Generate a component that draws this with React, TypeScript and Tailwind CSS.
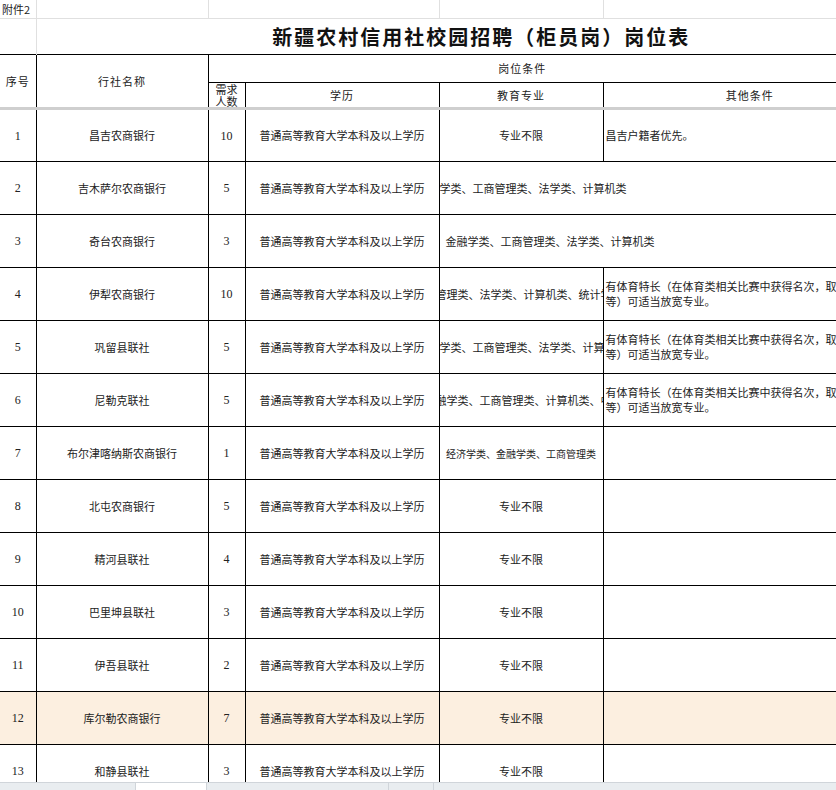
const rows = [
  { n: "1", name: "昌吉农商银行", c: "10", major: "专业不限", other: "昌吉户籍者优先。" },
  { n: "2", name: "吉木萨尔农商银行", c: "5", span: "学类、工商管理类、法学类、计算机类", off: 0 },
  { n: "3", name: "奇台农商银行", c: "3", span: "金融学类、工商管理类、法学类、计算机类", off: 6 },
  { n: "4", name: "伊犁农商银行", c: "10", clip: "管理类、法学类、计算机类、统计学类", sport: true, off: -4 },
  { n: "5", name: "巩留县联社", c: "5", clip: "学类、工商管理类、法学类、计算机类", sport: true, off: 0 },
  { n: "6", name: "尼勒克联社", c: "5", clip: "融学类、工商管理类、计算机类、中", sport: true, off: -4 },
  { n: "7", name: "布尔津喀纳斯农商银行", c: "1", major: "经济学类、金融学类、工商管理类", other: "", sm: true },
  { n: "8", name: "北屯农商银行", c: "5", major: "专业不限", other: "" },
  { n: "9", name: "精河县联社", c: "4", major: "专业不限", other: "" },
  { n: "10", name: "巴里坤县联社", c: "3", major: "专业不限", other: "" },
  { n: "11", name: "伊吾县联社", c: "2", major: "专业不限", other: "" },
  { n: "12", name: "库尔勒农商银行", c: "7", major: "专业不限", other: "", hl: true },
  { n: "13", name: "和静县联社", c: "3", major: "专业不限", other: "" },
];

const serif = { fontFamily: '"Liberation Serif", serif' };
const cell = "border border-black text-center align-middle p-0";

export default function App() {
  return (
    <div
      className="w-[836px] h-[790px] overflow-hidden bg-white text-[11px] text-[#222] relative"
      style={{ fontFamily: '"Noto Sans CJK SC", "Noto Sans", sans-serif' }}
    >
      <table className="table-fixed border-collapse w-[836px]">
        <colgroup>
          <col className="w-[36px]" />
          <col className="w-[172px]" />
          <col className="w-[37px]" />
          <col className="w-[194px]" />
          <col className="w-[164px]" />
          <col className="w-[233px]" />
        </colgroup>
        <tbody>
          <tr className="h-[18px]">
            <td colSpan={2} className="border-r border-b border-[#e0e0e0] text-left text-[11px] leading-none">
              <div className="flex items-center h-[18px]">
                <span className="w-[36px] pl-[2px] whitespace-nowrap">附件2</span>
                <span className="flex-1 border-l border-[#e0e0e0] h-[18px]" />
              </div>
            </td>
            <td colSpan={2} className="border-r border-b border-[#e0e0e0]" />
            <td className="border-r border-b border-[#e0e0e0]" />
            <td className="border-b border-[#e0e0e0]" />
          </tr>
          <tr className="h-[36px]">
            <td className="border-r border-[#e0e0e0]" />
            <td colSpan={5} className="text-center font-bold text-[20px] tracking-[2px] text-[#111] pl-[90px]" style={{ fontFamily: '"Noto Sans CJK SC", serif' }}>
              新疆农村信用社校园招聘（柜员岗）岗位表
            </td>
          </tr>
          <tr className="h-[28px]">
            <td rowSpan={2} className={`${cell} border-l-0 tracking-[1px]`}>序号</td>
            <td rowSpan={2} className={`${cell} tracking-[1px]`}>行社名称</td>
            <td colSpan={4} className={`${cell} border-r-0 tracking-[1px]`}>岗位条件</td>
          </tr>
          <tr className="h-[26px] border-b-[3px] border-[#cfcfcf]">
            <td className={`${cell} leading-[12px]`}>需求<br />人数</td>
            <td className={`${cell} tracking-[1px]`}>学历</td>
            <td className={`${cell} tracking-[1px]`}>教育专业</td>
            <td className={`${cell} border-r-0 tracking-[1px] pl-[60px]`}>其他条件</td>
          </tr>
          {rows.map((r) => (
            <tr key={r.n} className={`h-[53px] ${r.hl ? "bg-[#fcefe0]" : ""}`}>
              <td className={`${cell} border-l-0 text-[12px]`} style={serif}>{r.n}</td>
              <td className={cell}>{r.name}</td>
              <td className={`${cell} text-[12px]`} style={serif}>{r.c}</td>
              <td className={`${cell} whitespace-nowrap`}>普通高等教育大学本科及以上学历</td>
              {r.span !== undefined ? (
                <td colSpan={2} className={`${cell} border-r-0 text-left`}>
                  <span className="whitespace-nowrap" style={{ marginLeft: r.off }}>{r.span}</span>
                </td>
              ) : r.clip !== undefined ? (
                <>
                  <td className={`${cell} text-left`}>
                    <div className="overflow-hidden w-[163px] whitespace-nowrap">
                      <span style={{ marginLeft: r.off }} className="inline-block">{r.clip}</span>
                    </div>
                  </td>
                  <td className={`${cell} border-r-0 text-left`}>
                    <div className="overflow-hidden w-[232px] leading-[15px] pl-[2px]">
                      <div className="whitespace-nowrap">有体育特长（在体育类相关比赛中获得名次，取得</div>
                      <div className="whitespace-nowrap">等）可适当放宽专业。</div>
                    </div>
                  </td>
                </>
              ) : (
                <>
                  <td className={`${cell} ${r.sm ? "text-[10px] whitespace-nowrap" : ""}`}>{r.major}</td>
                  <td className={`${cell} border-r-0 text-left pl-[2px]`}>{r.other}</td>
                </>
              )}
            </tr>
          ))}
        </tbody>
      </table>
      <div className="absolute left-0 right-0 bottom-0 h-[8px] bg-[#e9edf0] border-t border-[#d0d5da] flex">
        <div className="ml-[135px] w-[72px] bg-white border-x border-[#d0d5da]" />
        <div className="ml-[92px] w-[90px] border-r border-[#d0d5da]" />
        <div className="w-[45px] border-r border-[#d0d5da]" />
      </div>
    </div>
  );
}
